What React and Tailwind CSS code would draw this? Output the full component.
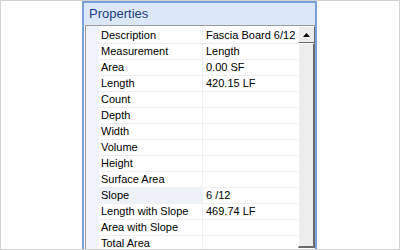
const rows = [
  { name: "Description", value: "Fascia Board 6/12" },
  { name: "Measurement", value: "Length" },
  { name: "Area", value: "0.00 SF" },
  { name: "Length", value: "420.15 LF" },
  { name: "Count", value: "" },
  { name: "Depth", value: "" },
  { name: "Width", value: "" },
  { name: "Volume", value: "" },
  { name: "Height", value: "" },
  { name: "Surface Area", value: "" },
  { name: "Slope", value: "6 /12", active: true },
  { name: "Length with Slope", value: "469.74 LF" },
  { name: "Area with Slope", value: "" },
  { name: "Total Area", value: "" },
];

function ScrollBar() {
  return (
    <div className="w-[17px] flex flex-col shrink-0">
      <div className="h-[17px] border-t border-l border-white border-r border-b border-r-[#6b6b6b] border-b-[#6b6b6b] bg-[#ececec] flex items-center justify-center">
        <svg width="7" height="4" viewBox="0 0 7 4">
          <polygon points="3.5,0 7,4 0,4" fill="#000" />
        </svg>
      </div>
      <div className="h-[205px] border-t border-l border-white border-r-2 border-b-2 border-r-[#6b6b6b] border-b-[#6b6b6b] bg-[#ededed]" />
    </div>
  );
}

export default function App() {
  return (
    <div
      className="w-[400px] h-[250px] overflow-hidden bg-white border border-[#d2d2d2]"
      style={{ fontFamily: "'Liberation Sans', Arial, sans-serif" }}
    >
      <div className="ml-[81px] w-[235px] h-[260px] border-x-2 border-t-2 border-[#7aa0da] bg-white flex flex-col">
        <div className="h-[22px] bg-[#dce8f9] pl-[5px] text-[13px] leading-[21px] text-[#1d3e7e]">
          Properties
        </div>
        <div className="flex-1 flex border-t border-l border-[#9c9c9c] ml-[1px]">
          <div className="w-[13px] bg-[#f0f4fa] shrink-0" />
          <div className="flex-1 pt-[2px] h-[224px] overflow-hidden">
            {rows.map((r) => (
              <div
                key={r.name}
                className="h-4 flex text-[11px] leading-[15px] text-black border-b border-[#efefef]"
              >
                <div
                  className={
                    "w-[104px] pl-[2px] border-r border-[#efefef] whitespace-nowrap " +
                    (r.active ? "bg-[#eef2f8]" : "")
                  }
                >
                  {r.name}
                </div>
                <div className="flex-1 pl-[3px] whitespace-nowrap overflow-hidden">
                  {r.value}
                </div>
              </div>
            ))}
          </div>
          <ScrollBar />
        </div>
      </div>
    </div>
  );
}
